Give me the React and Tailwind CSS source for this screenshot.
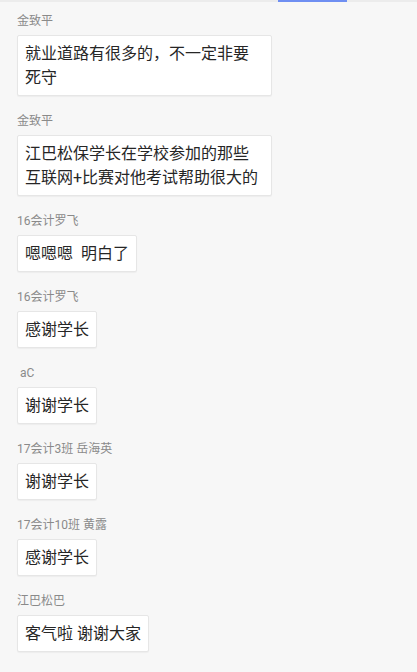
import React from "react";

const messages = [
  { name: "金致平", text: "就业道路有很多的，不一定非要死守" },
  { name: "金致平", text: "江巴松保学长在学校参加的那些互联网+比赛对他考试帮助很大的" },
  { name: "16会计罗飞", text: "嗯嗯嗯  明白了" },
  { name: "16会计罗飞", text: "感谢学长" },
  { name: " aC", text: "谢谢学长" },
  { name: "17会计3班 岳海英", text: "谢谢学长" },
  { name: "17会计10班 黄露", text: "感谢学长" },
  { name: "江巴松巴", text: "客气啦 谢谢大家" },
];

const font = { fontFamily: '"Roboto", "Noto Sans CJK SC", sans-serif' };

export default function App() {
  return (
    <div className="w-[417px] h-[672px] overflow-hidden bg-[#f7f7f7]" style={font}>
      {/* tab indicator strip */}
      <div className="h-[2px] bg-[#ececec] flex">
        <div className="ml-[278px] w-[69px] h-[2px] bg-[#6f8ff2]" />
      </div>

      <div className="flex flex-col gap-[17px] pt-[11px] px-[17px]">
        {messages.map((m, i) => (
          <div key={i} className="flex flex-col items-start gap-[6px]">
            <div className="text-[12px] leading-[16px] text-[#8a8a8a] whitespace-pre">
              {m.name}
            </div>
            <div className="max-w-[255px] bg-white border border-[#e6e6e6] rounded-[2px] px-[7px] pt-[6px] pb-[5px] text-[16px] leading-[24px] text-[#262626] whitespace-pre-wrap shadow-[0_1px_1px_rgba(0,0,0,0.04)]">
              {m.text}
            </div>
          </div>
        ))}
      </div>
    </div>
  );
}
